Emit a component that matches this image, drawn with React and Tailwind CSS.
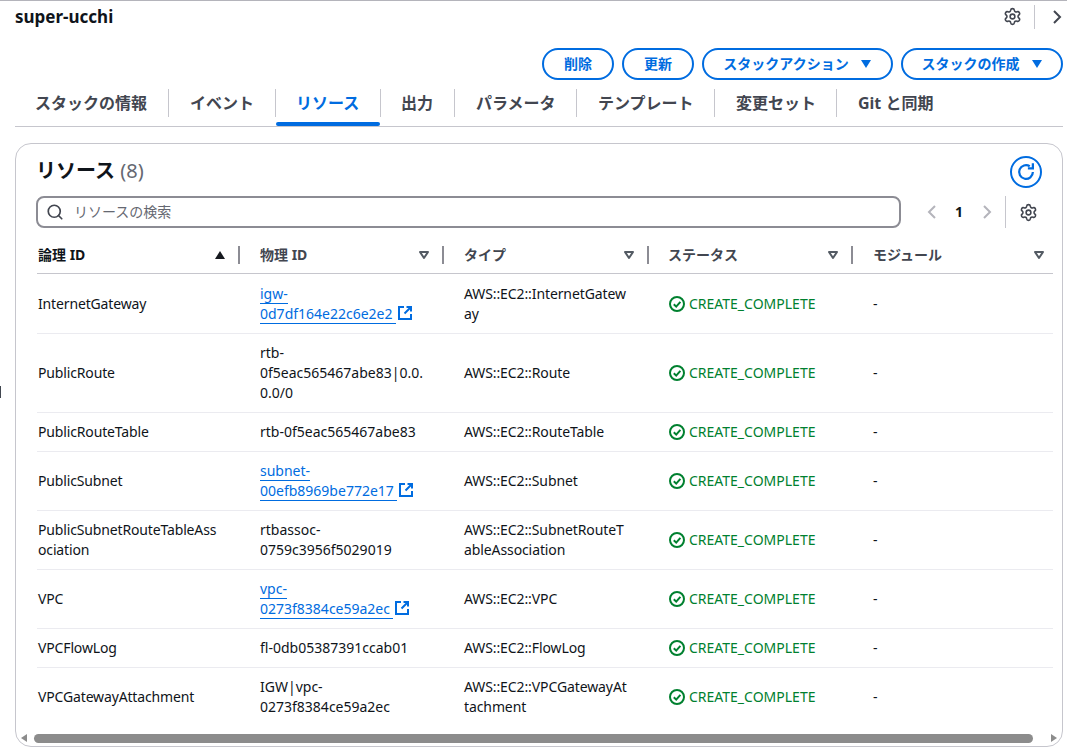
import { Search, Settings } from 'lucide-react';

const tabs = [
  { label: 'スタックの情報', width: 'w-[153px]', pad: 'pl-[20px]' },
  { label: 'イベント', width: 'w-[107px]', pad: 'pl-[21px]' },
  { label: 'リソース', width: 'w-[105px]', pad: 'pl-[20px]' },
  { label: '出力', width: 'w-[74px]', pad: 'pl-[20px]' },
  { label: 'パラメータ', width: 'w-[122px]', pad: 'pl-[21px]' },
  { label: 'テンプレート', width: 'w-[138px]', pad: 'pl-[21px]' },
  { label: '変更セット', width: 'w-[122px]', pad: 'pl-[21px]' },
  { label: 'Git と同期', width: 'w-[130px]', pad: 'pl-[21px]' }
];

const columns = [
  { label: '論理 ID', width: 'w-[204px]', pad: 'pl-[1px]', sorted: true },
  { label: '物理 ID', width: 'w-[204px]', pad: 'pl-[19px]' },
  { label: 'タイプ', width: 'w-[205px]', pad: 'pl-[19px]' },
  { label: 'ステータス', width: 'w-[204px]', pad: 'pl-[18px]' },
  { label: 'モジュール', width: 'w-[199px]', pad: 'pl-[19px]' }
];

const rows = [
  { name: 'InternetGateway', id: 'igw-0d7df164e22c6e2e2', link: true, type: 'AWS::EC2::InternetGateway' },
  { name: 'PublicRoute', id: 'rtb-0f5eac565467abe83|0.0.0.0/0', type: 'AWS::EC2::Route' },
  { name: 'PublicRouteTable', id: 'rtb-0f5eac565467abe83', type: 'AWS::EC2::RouteTable' },
  { name: 'PublicSubnet', id: 'subnet-00efb8969be772e17', link: true, type: 'AWS::EC2::Subnet' },
  { name: 'PublicSubnetRouteTableAssociation', id: 'rtbassoc-0759c3956f5029019', type: 'AWS::EC2::SubnetRouteTableAssociation' },
  { name: 'VPC', id: 'vpc-0273f8384ce59a2ec', link: true, type: 'AWS::EC2::VPC' },
  { name: 'VPCFlowLog', id: 'fl-0db05387391ccab01', type: 'AWS::EC2::FlowLog' },
  { name: 'VPCGatewayAttachment', id: 'IGW|vpc-0273f8384ce59a2ec', type: 'AWS::EC2::VPCGatewayAttachment' }
];

function Caret({ className = 'h-[10px] w-[12px]' }) {
  return (
    <svg viewBox="0 0 12 10" className={className}>
      <path d="M1 1h10L6 9z" fill="currentColor" />
    </svg>
  );
}

function SortIcon({ up }) {
  if (up) {
    return (
      <svg viewBox="0 0 12 10" className="h-[10px] w-[12px] text-[#16191f]">
        <path d="M1 9h10L6 1z" fill="currentColor" />
      </svg>
    );
  }
  return (
    <svg viewBox="0 0 12 10" className="h-[10px] w-[12px] text-[#545b64]">
      <path d="M2 2h8L6 8z" fill="none" stroke="currentColor" strokeWidth="2" strokeLinejoin="round" />
    </svg>
  );
}

function Chevron({ left, className }) {
  return (
    <svg viewBox="0 0 10 16" className={className} fill="none" stroke="currentColor" strokeWidth="2">
      <path d={left ? 'M8 2 2 8l6 6' : 'M2 2l6 6-6 6'} />
    </svg>
  );
}

function PillButton({ label, caret, className }) {
  return (
    <button className={`flex h-[32px] items-center justify-center gap-[11px] rounded-full border-2 border-[#006ce0] text-[14px] font-bold text-[#006ce0] ${className}`}>
      <span>{label}</span>
      {caret && <Caret />}
    </button>
  );
}

function ExternalIcon() {
  return (
    <svg viewBox="0 0 16 16" className="ml-[1px] inline-block h-[16px] w-[16px] align-[-2px] text-[#006ce0]" fill="none" stroke="currentColor" strokeWidth="2">
      <path d="M7 2H2v12h12V9" />
      <path d="M9.5 2H14v4.5M14 2 7.5 8.5" />
    </svg>
  );
}

function StatusIcon() {
  return (
    <svg viewBox="0 0 16 16" className="h-[16px] w-[16px] shrink-0 text-[#00802f]" fill="none" stroke="currentColor" strokeWidth="2">
      <circle cx="8" cy="8" r="7" />
      <path d="M4.8 8.2 7.2 10.6 11.4 5.8" />
    </svg>
  );
}

function PhysicalId({ row }) {
  if (!row.link) return <span>{row.id}</span>;
  const cut = row.id.indexOf('-') + 1;
  return (
    <a className="text-[#006ce0]">
      <span className="border-b border-[#006ce0]">{row.id.slice(0, cut)}</span>{' '}
      <span className="whitespace-nowrap">
        <span className="border-b border-[#006ce0] pr-[3px]">{row.id.slice(cut)}</span>
        <ExternalIcon />
      </span>
    </a>
  );
}

export default function App() {
  return (
    <div className="relative h-[756px] w-[1067px] overflow-hidden border-t border-[#b4b4bb] bg-white pl-[15px] pr-[4px] text-[14px] leading-[20px] text-[#0f141a] [font-family:'Noto_Sans','Noto_Sans_CJK_JP',sans-serif]">
      <div className="absolute left-0 top-[385px] h-[12px] w-px bg-[#414750]" />

      {/* HEADER */}
      <div className="flex h-[31px] items-center justify-between">
        <h1 className="text-[17px] font-bold leading-[20px]">super-ucchi</h1>
        <div className="flex items-center">
          <Settings className="h-[19px] w-[19px] text-[#424650]" strokeWidth={2} />
          <div className="ml-[12px] mr-[17px] h-[24px] w-px bg-[#c6c6cd]" />
          <Chevron className="mr-[1px] h-[16px] w-[10px] text-[#424650]" />
        </div>
      </div>

      {/* ACTIONS */}
      <div className="mt-[16px] flex justify-end gap-[8px]">
        <PillButton label="削除" className="w-[72px]" />
        <PillButton label="更新" className="w-[72px]" />
        <PillButton label="スタックアクション" caret className="w-[191px]" />
        <PillButton label="スタックの作成" caret className="w-[162px]" />
      </div>

      {/* TABS */}
      <div className="flex h-[47px] border-b border-[#c6c6cd] pt-[9px]">
        {tabs.map((tab, i) => (
          <div key={tab.label} className={`relative flex h-[28px] items-center text-[16px] font-bold ${tab.pad} ${tab.width} ${i > 0 ? 'border-l border-[#c6c6cd]' : ''} ${i === 2 ? 'text-[#006ce0]' : 'text-[#424650]'}`}>
            {tab.label}
            {i === 2 && <div className="absolute bottom-[-9px] left-0 right-0 h-[4px] rounded-full bg-[#006ce0]" />}
          </div>
        ))}
      </div>

      {/* CARD */}
      <div className="mt-[16px] h-[604px] w-[1048px] overflow-hidden rounded-[16px] border border-[#c6c6cd]">
        <div className="pl-[20px] pr-[20px] pt-[11px]">
          <div className="flex h-[34px] items-center justify-between">
            <h2 className="-mt-[2px] text-[20px] font-bold leading-[24px]">
              リソース <span className="font-normal text-[#656871]">(8)</span>
            </h2>
            <button className="flex h-[32px] w-[32px] items-center justify-center rounded-full border-2 border-[#006ce0] text-[#006ce0]">
              <svg viewBox="0 0 16 16" className="h-[20px] w-[20px]" fill="none" stroke="currentColor" strokeWidth="1.8">
                <path d="M13.5 8A5.5 5.5 0 1 1 11 3.4" />
                <path d="M13.5 1v4h-4" />
              </svg>
            </button>
          </div>

          <div className="mt-[7px] flex h-[32px] items-center">
            <div className="flex h-[32px] w-[865px] items-center gap-[10px] rounded-[8px] border-2 border-[#8c8c94] pl-[8px]">
              <Search className="h-[18px] w-[18px] text-[#424650]" strokeWidth={2.25} />
              <span className="text-[#656871]">リソースの検索</span>
            </div>
            <div className="ml-[26px] flex items-center">
              <Chevron left className="h-[16px] w-[10px] text-[#b4b4bb]" />
              <span className="ml-[18px] mr-[19px] text-[14px] font-bold leading-[20px]">1</span>
              <Chevron className="h-[16px] w-[10px] text-[#b4b4bb]" />
            </div>
            <div className="ml-[13px] mr-[13px] h-[32px] w-px bg-[#c6c6cd]" />
            <Settings className="h-[19px] w-[19px] text-[#424650]" strokeWidth={2} />
          </div>
        </div>

        {/* TABLE */}
        <table className="ml-[21px] mt-[10px] w-[1016px] table-fixed border-collapse">
          <thead>
            <tr className="h-[35px] border-b border-[#c6c6cd]">
              {columns.map((col, i) => (
                <th key={col.label} className={`${col.width} p-0 text-left font-normal`}>
                  <div className={`flex items-center justify-between font-bold ${col.pad} ${i === 0 ? 'text-[#0f141a]' : 'text-[#424650]'}`}>
                    <span>{col.label}</span>
                    <span className={`flex items-center gap-[12px] ${i === 4 ? 'pr-[8px]' : ''}`}>
                      <SortIcon up={col.sorted} />
                      {i < 4 && <span className="mr-[1px] h-[18px] w-[2px] bg-[#8c8c94]" />}
                    </span>
                  </div>
                </th>
              ))}
            </tr>
          </thead>
          <tbody>
            {rows.map((row, i) => {
              const pad = i === 0 ? 'pt-[10px] pb-[9px]' : 'py-[9px]';
              return (
                <tr key={row.name} className={i < rows.length - 1 ? 'border-b border-[#ebebf0]' : ''}>
                  <td className={`${pad} pl-[1px] align-middle`}>
                    <div className="w-[182px] tracking-[-0.15px] [overflow-wrap:anywhere]">{row.name}</div>
                  </td>
                  <td className={`${pad} pl-[19px] align-middle`}>
                    <div className="w-[168px] [overflow-wrap:anywhere]"><PhysicalId row={row} /></div>
                  </td>
                  <td className={`${pad} pl-[19px] align-middle`}>
                    <div className="w-[164px] tracking-[-0.1px] [overflow-wrap:anywhere]">{row.type}</div>
                  </td>
                  <td className={`${pad} pl-[19px] align-middle`}>
                    <div className="flex items-center gap-[4px] text-[#00802f]">
                      <StatusIcon />
                      <span>CREATE_COMPLETE</span>
                    </div>
                  </td>
                  <td className={`${pad} pl-[19px] align-middle`}>-</td>
                </tr>
              );
            })}
          </tbody>
        </table>

        {/* SCROLLBAR */}
        <div className="mt-[7px] flex h-[11px] items-center">
          <svg viewBox="0 0 6 8" className="ml-[5px] h-[8px] w-[6px] text-[#8c8c8c]"><path d="M6 0v8L0 4z" fill="currentColor" /></svg>
          <div className="ml-[7px] h-[9px] w-[999px] rounded-full bg-[#8c8c8c]" />
          <svg viewBox="0 0 6 8" className="ml-[18px] h-[8px] w-[6px] text-[#8c8c8c]"><path d="M0 0v8l6-4z" fill="currentColor" /></svg>
        </div>
      </div>
    </div>
  );
}
